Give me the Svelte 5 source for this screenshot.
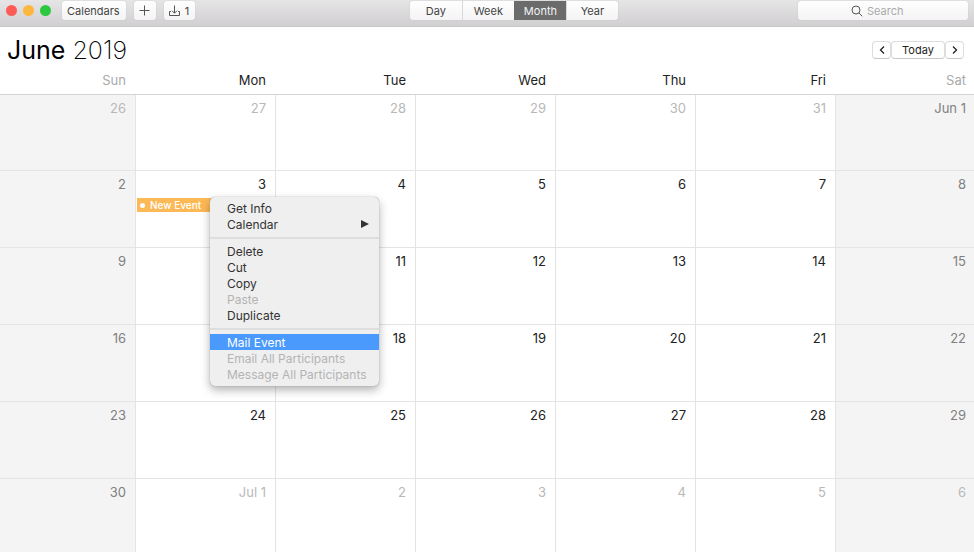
<script>
    const views = ['Day', 'Week', 'Month', 'Year'];
    const dayNames = ['Sun', 'Mon', 'Tue', 'Wed', 'Thu', 'Fri', 'Sat'];

    // Visible days, one array per week. Labels with a month name start a new month.
    const weeks = [
        ['26', '27', '28', '29', '30', '31', 'Jun 1'],
        ['2', '3', '4', '5', '6', '7', '8'],
        ['9', '10', '11', '12', '13', '14', '15'],
        ['16', '17', '18', '19', '20', '21', '22'],
        ['23', '24', '25', '26', '27', '28', '29'],
        ['30', 'Jul 1', '2', '3', '4', '5', '6'],
    ];

    // Context menu, split into groups by separators
    const menuGroups = [
        [{ label: 'Get Info' }, { label: 'Calendar', submenu: true }],
        [
            { label: 'Delete' },
            { label: 'Cut' },
            { label: 'Copy' },
            { label: 'Paste', disabled: true },
            { label: 'Duplicate' },
        ],
        [
            { label: 'Mail Event' },
            { label: 'Email All Participants', disabled: true },
            { label: 'Message All Participants', disabled: true },
        ],
    ];

    let view = $state('Month');
    let search = $state('');
    let menuOpen = $state(true);
    let highlighted = $state('Mail Event');

    function isOutside(week, day) {
        return (week === 0 && day < 6) || (week === 5 && day > 0);
    }

    // Dates that lie under the open menu
    function isCovered(week, day) {
        return menuOpen && day === 1 && (week === 2 || week === 3);
    }

    function openMenu(event) {
        event.preventDefault();
        menuOpen = true;
    }

    function choose() {
        menuOpen = false;
    }
</script>

<div class="window">
    <header class="toolbar">
        <div class="left">
            <div class="lights">
                <button class="light close" aria-label="Close"></button>
                <button class="light minimize" aria-label="Minimize"></button>
                <button class="light zoom" aria-label="Zoom"></button>
            </div>
            <button class="tool">Calendars</button>
            <button class="tool" aria-label="Add event">
                <svg width="11" height="11" viewBox="0 0 11 11">
                    <path d="M5.5 0.5v10M0.5 5.5h10" />
                </svg>
            </button>
            <button class="tool" aria-label="Inbox, 1 invitation">
                <svg width="11" height="12" viewBox="0 0 11 12">
                    <path d="M5.5 0.5v7.5M3 5.7l2.5 2.5l2.5-2.5M2 6.5h-1.5v4h10v-4h-1.5" />
                </svg>
                <span>1</span>
            </button>
        </div>

        <div class="views">
            {#each views as name}
                <button class:active={view === name} onclick={() => (view = name)}>{name}</button>
            {/each}
        </div>

        <div class="right">
            <label class="search">
                <svg width="12" height="12" viewBox="0 0 12 12">
                    <circle cx="5" cy="5" r="4" />
                    <path d="M8 8l3.3 3.3" />
                </svg>
                <input type="text" placeholder="Search" aria-label="Search" bind:value={search} />
            </label>
        </div>
    </header>

    <div class="heading">
        <h1>June <span>2019</span></h1>
        <div class="nav">
            <button aria-label="Previous month">
                <svg width="6" height="10" viewBox="0 0 6 10"><path d="M5 1.5l-3.5 3.5l3.5 3.5" /></svg>
            </button>
            <button class="today">Today</button>
            <button aria-label="Next month">
                <svg width="6" height="10" viewBox="0 0 6 10"><path d="M1 1.5l3.5 3.5l-3.5 3.5" /></svg>
            </button>
        </div>
    </div>

    <table>
        <thead>
            <tr>
                {#each dayNames as name, d}
                    <th class:weekend={d === 0 || d === 6}>{name}</th>
                {/each}
            </tr>
        </thead>
        <tbody>
            {#each weeks as week, w}
                <tr>
                    {#each week as label, d}
                        <td class:weekend={d === 0 || d === 6} class:outside={isOutside(w, d)}>
                            {#if !isCovered(w, d)}
                                <div class="date">{label}</div>
                            {/if}
                            {#if w === 1 && d === 1}
                                <div class="slot">
                                    <button class="event" oncontextmenu={openMenu}>
                                        <span class="dot"></span>New Event
                                    </button>
                                    {#if menuOpen}
                                        <div class="menu" role="menu">
                                            {#each menuGroups as group, g}
                                                {#if g > 0}<hr />{/if}
                                                {#each group as item}
                                                    <button
                                                        role="menuitem"
                                                        disabled={item.disabled}
                                                        class:highlighted={highlighted === item.label}
                                                        onmouseenter={() => (highlighted = item.label)}
                                                        onclick={choose}
                                                    >
                                                        {item.label}
                                                        {#if item.submenu}
                                                            <svg width="8" height="8" viewBox="0 0 8 8"><path d="M0 0l8 4l-8 4z" /></svg>
                                                        {/if}
                                                    </button>
                                                {/each}
                                            {/each}
                                        </div>
                                    {/if}
                                </div>
                            {/if}
                        </td>
                    {/each}
                </tr>
            {/each}
        </tbody>
    </table>
</div>

<style>
    :global(body) {
        margin: 0;
        background: #fff;
    }

    .window {
        height: 100vh;
        overflow: hidden;
        font-family: Inter, 'Liberation Sans', sans-serif;
        color: #222;
    }

    button,
    input {
        font: inherit;
        color: inherit;
        margin: 0;
        padding: 0;
        border: none;
        background: none;
    }

    svg {
        fill: none;
        stroke: #555;
    }

    /* Toolbar */
    .toolbar {
        display: flex;
        height: 27px;
        box-sizing: border-box;
        padding: 1px 6px 0;
        border-bottom: 1px solid #c8c6c8;
        background: linear-gradient(#e6e5e6, #d1cfd1);
        font-size: 11px;
        color: #444;
    }

    .left {
        flex: 15 1 0;
        display: flex;
        align-items: flex-start;
        gap: 8px;
    }

    .right {
        flex: 13 1 0;
        display: flex;
        justify-content: flex-end;
        align-items: flex-start;
    }

    .lights {
        display: flex;
        align-items: center;
        gap: 6px;
        height: 19px;
        margin-right: 3px;
    }

    .light {
        width: 11px;
        height: 11px;
        border-radius: 50%;
    }

    .close {
        background: #fc5b57;
    }

    .minimize {
        background: #fdb73e;
    }

    .zoom {
        background: #2bc840;
    }

    .tool,
    .views,
    .search {
        height: 19px;
        border-radius: 3px;
        background: linear-gradient(#fefefe, #f4f4f4);
        box-shadow: 0 0 1px #aaa;
    }

    .tool {
        display: flex;
        align-items: center;
        gap: 5px;
        padding: 0 6px 0 5px;
    }

    .views {
        display: flex;
    }

    .views button {
        width: 52px;
        border-left: 1px solid #d8d8d8;
    }

    .views button:first-child {
        border-left: none;
    }

    .views button.active {
        border-left-color: #6b6b6b;
        background: #6b6b6b;
        color: #f4f4f4;
    }

    .search {
        display: flex;
        align-items: center;
        justify-content: center;
        gap: 4px;
        width: 170px;
    }

    .search input {
        width: 48px;
        outline: none;
    }

    .search input::placeholder {
        color: #aaa;
        opacity: 1;
    }

    /* Month title */
    .heading {
        display: flex;
        justify-content: space-between;
        align-items: center;
        height: 45px;
        padding: 0 10px 0 7px;
    }

    h1 {
        margin: 0;
        font-size: 25px;
        font-weight: 400;
        color: #000;
    }

    h1 span {
        font-weight: 200;
    }

    .nav {
        display: flex;
        font-size: 11px;
    }

    .nav button {
        display: flex;
        align-items: center;
        justify-content: center;
        width: 19px;
        height: 18px;
        box-sizing: border-box;
        border: 1px solid #ddd;
        border-bottom-color: #c8c8c8;
        border-radius: 4px;
        background: #fff;
    }

    .nav .today {
        width: 54px;
    }

    .nav svg {
        stroke: #222;
        stroke-width: 1.3;
    }

    /* Month grid */
    table {
        width: 100%;
        table-layout: fixed;
        border-collapse: separate;
        border-spacing: 0;
        font-size: 13px;
    }

    th {
        height: 22px;
        padding: 0 10px 0 0;
        border-bottom: 1px solid #d4d4d8;
        font-weight: 400;
        line-height: 16px;
        text-align: right;
        vertical-align: top;
    }

    th:first-child,
    th:last-child {
        width: 136px;
        height: 23px;
        box-sizing: border-box;
    }

    th:last-child {
        width: 138px;
        padding-right: 8px;
    }

    th.weekend {
        color: #aaa;
    }

    td {
        height: 77px;
        box-sizing: border-box;
        padding: 0;
        border-right: 1px solid #e4e4e4;
        border-bottom: 1px solid #e4e4e4;
        vertical-align: top;
    }

    tbody tr:first-child td {
        height: 76px;
    }

    td:last-child {
        border-right: none;
    }

    td.weekend {
        background: #f4f4f4;
        color: #808080;
    }

    td.outside {
        color: #b8b8b8;
    }

    .date {
        padding: 5px 9px 0 0;
        line-height: 16px;
        text-align: right;
    }

    td:last-child .date {
        padding-right: 8px;
    }

    /* Event and its context menu */
    .slot {
        position: relative;
        margin: 6px 1px 0;
    }

    .event {
        display: flex;
        align-items: center;
        gap: 5px;
        width: 100%;
        height: 14px;
        padding-left: 3px;
        background: #fdb955;
        color: #fff;
        font-size: 10px;
        font-weight: 500;
    }

    .dot {
        width: 5px;
        height: 5px;
        border-radius: 50%;
        background: #fff;
    }

    .menu {
        position: absolute;
        top: -1px;
        left: 73px;
        z-index: 1;
        width: 169px;
        box-sizing: border-box;
        padding: 3px 0 4px;
        border-radius: 5px;
        background: #efefef;
        box-shadow: 0 0 1px #777, 0 4px 10px rgba(0, 0, 0, 0.3);
        font-size: 12px;
        color: #333;
    }

    .menu button {
        display: flex;
        align-items: center;
        justify-content: space-between;
        width: 100%;
        height: 16px;
        padding: 0 10px 0 17px;
        white-space: nowrap;
    }

    .menu button:disabled {
        color: #b4b4b4;
    }

    .menu button.highlighted {
        background: #4a99fd;
        color: #fff;
    }

    .menu svg {
        fill: #333;
        stroke: none;
    }

    .menu hr {
        height: 2px;
        margin: 5px 0 4px;
        border: none;
        background: #dedede;
    }
</style>
